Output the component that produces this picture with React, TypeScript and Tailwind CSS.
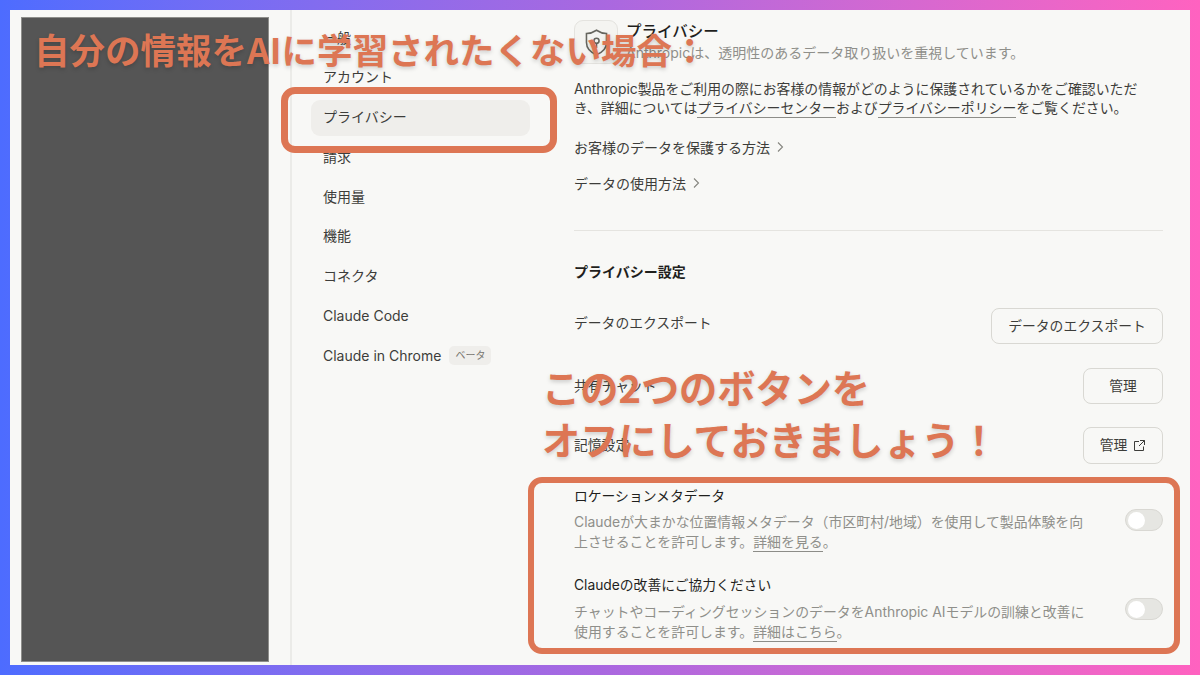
const jp = "font-['Inter','Noto_Sans_CJK_JP',sans-serif]";

function Nav({ label, active, badge }: { label: string; active?: boolean; badge?: string }) {
  return (
    <div className={`flex h-[36px] items-center gap-2 rounded-[9px] px-3 pb-[2px] text-[14px] text-[#3d3d3a] ${active ? "bg-[#efeeeb]" : ""}`}>
      <span>{label}</span>
      {badge && <span className="rounded-[5px] bg-[#efeeeb] px-[6px] py-[2px] text-[10px] leading-[15px] text-[#77756f]">{badge}</span>}
    </div>
  );
}

function Btn({ children, className }: { children: React.ReactNode; className: string }) {
  return (
    <div className={`flex items-center justify-center gap-[6px] rounded-[8px] border border-[#d9d8d3] text-[13.8px] text-[#3d3d3a] ${className}`}>
      {children}
    </div>
  );
}

function Toggle() {
  return (
    <div className="flex h-[22px] w-[38px] shrink-0 items-center rounded-full border border-[#d9d8d3] bg-[#e6e6e2] pl-[2px]">
      <div className="h-[17px] w-[17px] rounded-full bg-white" />
    </div>
  );
}

function Link({ children }: { children: React.ReactNode }) {
  return <span className="border-b border-[#8d8d88] pb-[1px]">{children}</span>;
}

function Chevron() {
  return (
    <svg width="8" height="12" viewBox="0 0 8 12" fill="none" stroke="#85857f" strokeWidth="1.1" className="ml-[6px]">
      <path d="M2 1.5 L6.5 6 L2 10.5" />
    </svg>
  );
}

export default function App() {
  return (
    <div className={`relative h-[675px] w-[1200px] overflow-hidden bg-gradient-to-r from-[#4d6cff] via-[#a968e0] to-[#ff62c0] p-[10px] ${jp}`}>
      <div className="flex h-[655px] w-[1180px] bg-[#f8f8f6]">
        {/* Left redacted sidebar */}
        <div className="w-[282px] shrink-0 border-r-2 border-[#ebebe8] pb-[2px] pl-[11px] pt-[7px]">
          <div className="h-[645px] w-[248px] border border-[#8e8e8b] bg-[#555555]" />
        </div>

        {/* Settings nav */}
        <div className="w-[282px] shrink-0 pl-[19px] pt-[10px]">
          <div className="flex w-[219px] flex-col gap-[3.75px]">
            <Nav label="一般" />
            <Nav label="アカウント" />
            <Nav label="プライバシー" active />
            <Nav label="請求" />
            <Nav label="使用量" />
            <Nav label="機能" />
            <Nav label="コネクタ" />
            <Nav label="Claude Code" />
            <Nav label="Claude in Chrome" badge="ベータ" />
          </div>
        </div>

        {/* Content */}
        <div className="w-[589px] shrink-0 pt-[10px] text-[#3d3d3a]">
          <div className="flex h-[44px] gap-2">
            <div className="flex h-[44px] w-[44px] items-center justify-center rounded-[9px] border border-[#e4e3df] bg-[#f4f4f1]">
              <svg width="27" height="29" viewBox="0 0 24 26" fill="none" stroke="#66665f" strokeWidth="1.4">
                <path d="M12 2 C9 4 6 5 3 5 V13 C3 18 7 22 12 24 C17 22 21 18 21 13 V5 C18 5 15 4 12 2 Z" />
                <circle cx="12" cy="11.5" r="2.3" />
                <path d="M12 14 V18" />
              </svg>
            </div>
            <div className="flex flex-col pt-[1px]">
              <div className="text-[15.5px] font-medium leading-[21px] text-[#1f1f1d]">プライバシー</div>
              <div className="text-[14px] leading-[21px] text-[#8f8f8a]">Anthropicは、透明性のあるデータ取り扱いを重視しています。</div>
            </div>
          </div>

          <p className="mt-[16px] text-[13.9px] leading-[19px]">
            Anthropic製品をご利用の際にお客様の情報がどのように保護されているかをご確認いただき、詳細については<Link>プライバシーセンター</Link>および<Link>プライバシーポリシー</Link>をご覧ください。
          </p>
          <div className="mt-[19px] flex h-[20px] items-center text-[14px]">お客様のデータを保護する方法<Chevron /></div>
          <div className="mt-[16px] flex h-[20px] items-center text-[14px]">データの使用方法<Chevron /></div>

          <div className="mt-[37px] border-t border-[#e5e4e0]" />

          <div className="mt-[31px] text-[14px] font-bold leading-[20px] text-[#1f1f1d]">プライバシー設定</div>

          <div className="mt-[26px] flex h-[36px] items-start justify-between">
            <span className="mt-[5px] text-[13.8px] leading-[20px]">データのエクスポート</span>
            <Btn className="h-[36px] w-[172px]">データのエクスポート</Btn>
          </div>
          <div className="mt-[24px] flex h-[36px] items-center justify-between">
            <span className="text-[13.8px]">共有チャット</span>
            <Btn className="h-[36px] w-[80px]">管理</Btn>
          </div>
          <div className="mt-[23px] flex h-[37px] items-center justify-between">
            <span className="text-[13.8px]">記憶設定</span>
            <Btn className="h-[37px] w-[80px]">
              管理
              <svg width="13" height="13" viewBox="0 0 13 13" fill="none" stroke="#3d3d3a" strokeWidth="1">
                <path d="M6 2.5 H1.5 V11.5 H10.5 V7.5 M7 1.5 H11.5 V6 M11.5 1.5 L6 7" />
              </svg>
            </Btn>
          </div>

          <div className="mt-[22px] text-[13.8px] leading-[20px] text-[#1f1f1d]">ロケーションメタデータ</div>
          <div className="mt-[6px] flex items-center justify-between">
            <p className="w-[530px] text-[13.9px] leading-[20px] text-[#8f8f8a]">
              Claudeが大まかな位置情報メタデータ（市区町村/地域）を使用して製品体験を向<br />上させることを許可します。<Link>詳細を見る</Link>。
            </p>
            <div className="-mt-[24px]"><Toggle /></div>
          </div>
          <div className="mt-[23px] text-[13.8px] leading-[20px] text-[#1f1f1d]">Claudeの改善にご協力ください</div>
          <div className="mt-[7px] flex items-center justify-between">
            <p className="w-[530px] text-[13.9px] leading-[20px] text-[#8f8f8a]">
              チャットやコーディングセッションのデータをAnthropic AIモデルの訓練と改善に<br />使用することを許可します。<Link>詳細はこちら</Link>。
            </p>
            <div className="-mt-[26px]"><Toggle /></div>
          </div>
        </div>
      </div>

      {/* Annotation overlays */}
      <div className="absolute left-[281px] top-[87px] h-[66px] w-[276px] rounded-[14px] border-[7px] border-[#dd7654]" />
      <div className="absolute left-[528px] top-[477px] h-[177px] w-[652px] rounded-[14px] border-[6px] border-[#dd7654]" />
      <div className="absolute left-[34px] top-[24px] whitespace-nowrap font-['Noto_Sans_CJK_JP',sans-serif] text-[35.5px] font-bold leading-[50px] text-[#dd7654] [text-shadow:0_2px_4px_rgba(0,0,0,0.18)]">
        自分の情報をAIに学習されたくない場合：
      </div>
      <div className="absolute left-[542px] top-[360px] whitespace-nowrap font-['Noto_Sans_CJK_JP',sans-serif] text-[38.2px] font-bold leading-[54px] text-[#dd7654] [text-shadow:0_2px_4px_rgba(0,0,0,0.18)]">
        この2つのボタンを
      </div>
      <div className="absolute left-[542px] top-[412px] whitespace-nowrap font-['Noto_Sans_CJK_JP',sans-serif] text-[38.2px] font-bold leading-[54px] text-[#dd7654] [text-shadow:0_2px_4px_rgba(0,0,0,0.18)]">
        オフにしておきましょう！
      </div>
    </div>
  );
}
